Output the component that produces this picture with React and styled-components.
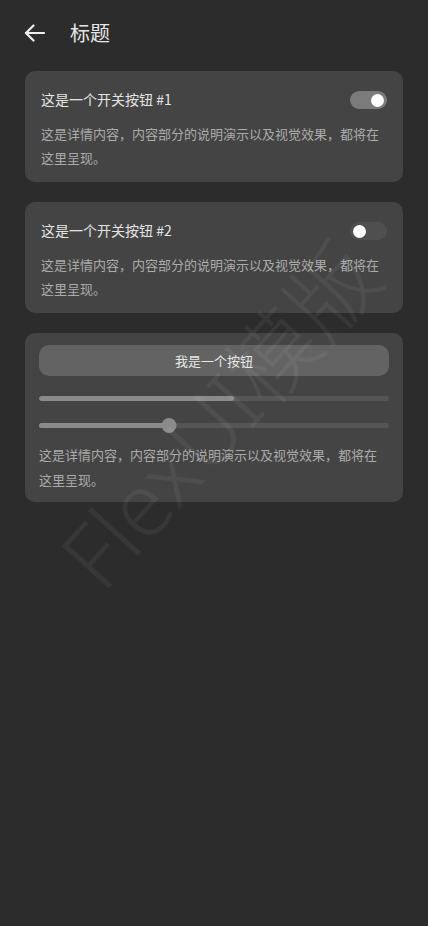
import React from "react";
import styled, { createGlobalStyle } from "styled-components";

const Global = createGlobalStyle`
  html, body { margin: 0; padding: 0; background: #2c2c2c; }
  body { font-family: "Noto Sans CJK SC", "Noto Sans", sans-serif; }
  * { box-sizing: border-box; }
`;

const Page = styled.div`
  position: relative;
  width: 428px;
  min-height: 926px;
  background: #2c2c2c;
  overflow: hidden;
`;

const Header = styled.div`
  height: 66px;
  display: flex;
  align-items: center;
  padding-left: 24px;
  gap: 25px;
`;

const BackBtn = styled.div`
  width: 21px;
  height: 22px;
  display: flex;
  align-items: center;
`;

const Title = styled.div`
  font-size: 20px;
  color: #e6e6e6;
  line-height: 28px;
`;

const List = styled.div`
  display: flex;
  flex-direction: column;
  gap: 20px;
  padding: 5px 25px 0;
`;

const Card = styled.div`
  background: #444444;
  border-radius: 10px;
  padding: ${(p) => p.$pad};
  display: flex;
  flex-direction: column;
`;

const Row = styled.div`
  height: 26px;
  display: flex;
  align-items: center;
  justify-content: space-between;
`;

const RowTitle = styled.div`
  font-size: 14px;
  color: #e4e4e4;
  margin-top: -2px;
`;

const Switch = styled.div`
  width: 37px;
  height: 18px;
  border-radius: 9px;
  background: ${(p) => (p.$on ? "#7b7b7b" : "#4f4f4f")};
  display: flex;
  align-items: center;
  justify-content: ${(p) => (p.$on ? "flex-end" : "flex-start")};
  padding: 0 3px;
`;

const Knob = styled.div`
  width: 13px;
  height: 13px;
  border-radius: 50%;
  background: #ffffff;
`;

const Desc = styled.div`
  margin-top: ${(p) => p.$mt || 0}px;
  font-size: 13px;
  line-height: ${(p) => p.$lh || 24}px;
  color: #ababab;
`;

const Button = styled.div`
  height: 31px;
  border-radius: 10px;
  background: #636363;
  color: #e8e8e8;
  font-size: 13px;
  display: flex;
  align-items: center;
  justify-content: center;
`;

const Progress = styled.div`
  margin-top: 20px;
  height: 5px;
  border-radius: 3px;
  background: #555555;
  overflow: hidden;
  display: flex;
`;

const Fill = styled.div`
  height: 100%;
  background: #8b8b8b;
  border-radius: 3px;
`;

const Slider = styled.div`
  position: relative;
  margin-top: 16px;
  height: 16px;
  display: flex;
  align-items: center;
`;

const Track = styled.div`
  flex: 1;
  height: 5px;
  border-radius: 3px;
  background: #555555;
  display: flex;
`;

const Thumb = styled.div`
  position: absolute;
  top: 0.5px;
  width: 15px;
  height: 15px;
  border-radius: 50%;
  background: #8b8b8b;
  transform: translateX(-7.5px);
`;

const Watermark = styled.div`
  position: absolute;
  left: 216px;
  top: 412px;
  transform: translate(-50%, -50%) rotate(-48deg);
  font-family: "Noto Sans", "Noto Sans CJK SC", sans-serif;
  font-weight: 300;
  font-size: 88px;
  white-space: nowrap;
  color: rgba(255, 255, 255, 0.055);
  pointer-events: none;
`;

const Arrow = () => (
  <svg width="21" height="18" viewBox="0 0 21 18" fill="none" stroke="#eeeeee" strokeWidth="2.2" strokeLinecap="round" strokeLinejoin="round">
    <line x1="2" y1="9" x2="20" y2="9" />
    <polyline points="9.5,1.5 2,9 9.5,16.5" />
  </svg>
);

const text = "这是详情内容，内容部分的说明演示以及视觉效果，都将在这里呈现。";

export default function App() {
  return (
    <Page>
      <Global />
      <Header>
        <BackBtn><Arrow /></BackBtn>
        <Title>标题</Title>
      </Header>
      <List>
        <Card $pad="16px 16px 12px">
          <Row>
            <RowTitle>这是一个开关按钮 #1</RowTitle>
            <Switch $on><Knob /></Switch>
          </Row>
          <Desc $mt={9}>{text}</Desc>
        </Card>
        <Card $pad="16px 16px 12px">
          <Row>
            <RowTitle>这是一个开关按钮 #2</RowTitle>
            <Switch><Knob /></Switch>
          </Row>
          <Desc $mt={9}>{text}</Desc>
        </Card>
        <Card $pad="12px 14px 10px">
          <Button>我是一个按钮</Button>
          <Progress>
            <Fill style={{ width: "55.7%" }} />
          </Progress>
          <Slider>
            <Track>
              <Fill style={{ width: "37.1%" }} />
            </Track>
            <Thumb style={{ left: "37.1%" }} />
          </Slider>
          <Desc $mt={9} $lh={25}>{text}</Desc>
        </Card>
      </List>
      <Watermark>FlexUI模版</Watermark>
    </Page>
  );
}
